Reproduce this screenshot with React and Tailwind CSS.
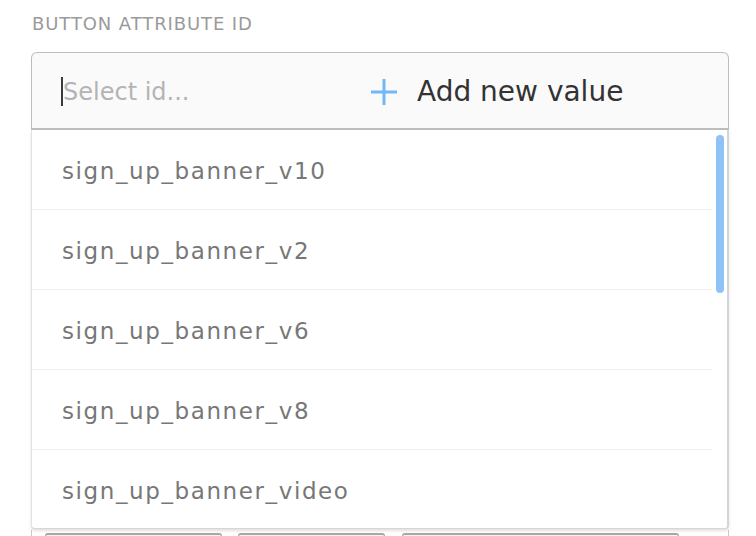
import React from "react";

const options = [
  "sign_up_banner_v10",
  "sign_up_banner_v2",
  "sign_up_banner_v6",
  "sign_up_banner_v8",
  "sign_up_banner_video",
];

const PlusIcon = () => (
  <svg width="26" height="26" viewBox="0 0 26 26" className="flex-none">
    <path d="M13 0v26M0 13h26" stroke="#74b7f6" strokeWidth="3" fill="none" />
  </svg>
);

const App = () => {
  return (
    <div
      className="w-[756px] h-[536px] overflow-hidden bg-white"
      style={{ fontFamily: '"DejaVu Sans", sans-serif' }}
    >
      <div className="pl-[31px] pt-[13px]">
        {/* Field label */}
        <div className="pl-[1px] text-[18px] leading-[22px] tracking-[0.9px] text-[#9a9a9a]">
          BUTTON ATTRIBUTE ID
        </div>

        {/* Combobox */}
        <div className="mt-[17px] w-[698px]">
          <div className="h-[78px] flex items-center pt-[2px] bg-[#fafafa] border-[1.5px] border-b-2 border-[#bdbdbd] rounded-t-[6px] pl-[29px]">
            <div className="w-[310px] flex-none flex items-center">
              <span className="w-[2px] h-[29px] bg-[#3a3a3a]" />
              <span className="text-[24px] text-[#b4b4b4] leading-none">Select id...</span>
            </div>
            <PlusIcon />
            <span className="ml-[20px] text-[28px] text-[#333333] leading-none">Add new value</span>
          </div>

          {/* Options list */}
          <div className="relative h-[399px] overflow-hidden bg-white border-l border-r-2 border-b border-l-[#dfe2e6] border-r-[#d2d5d9] border-b-[#d6d6d6] rounded-b-[4px] shadow-[0_2px_3px_rgba(0,0,0,0.12)]">
            <div className="mr-[15px]">
              {options.map((o) => (
                <div
                  key={o}
                  className="h-[80px] flex items-center pt-[4px] pl-[30px] border-b border-[#f1f1f1] text-[23px] tracking-[1.6px] text-[#777777]"
                >
                  {o}
                </div>
              ))}
            </div>
            <div className="absolute left-[684px] top-[5px] w-[8px] h-[158px] rounded-full bg-[#8fc2f6]" />
          </div>

          {/* Form content beneath the dropdown */}
          <div className="mt-[1px] h-[20px] flex border-x border-[#c8c8c8] pt-[3px]">
            <div className="ml-[13px] w-[177px] h-[20px] bg-[#f4f4f4] border-t-2 border-x border-[#a8a8a8] rounded-t-[3px]" />
            <div className="ml-[16px] w-[147px] h-[20px] bg-[#f4f4f4] border-t-2 border-x border-[#a8a8a8] rounded-t-[3px]" />
            <div className="ml-[17px] w-[277px] h-[20px] bg-[#f4f4f4] border-t-2 border-x border-[#a8a8a8] rounded-t-[3px]" />
          </div>
        </div>
      </div>
    </div>
  );
};

export default App;
